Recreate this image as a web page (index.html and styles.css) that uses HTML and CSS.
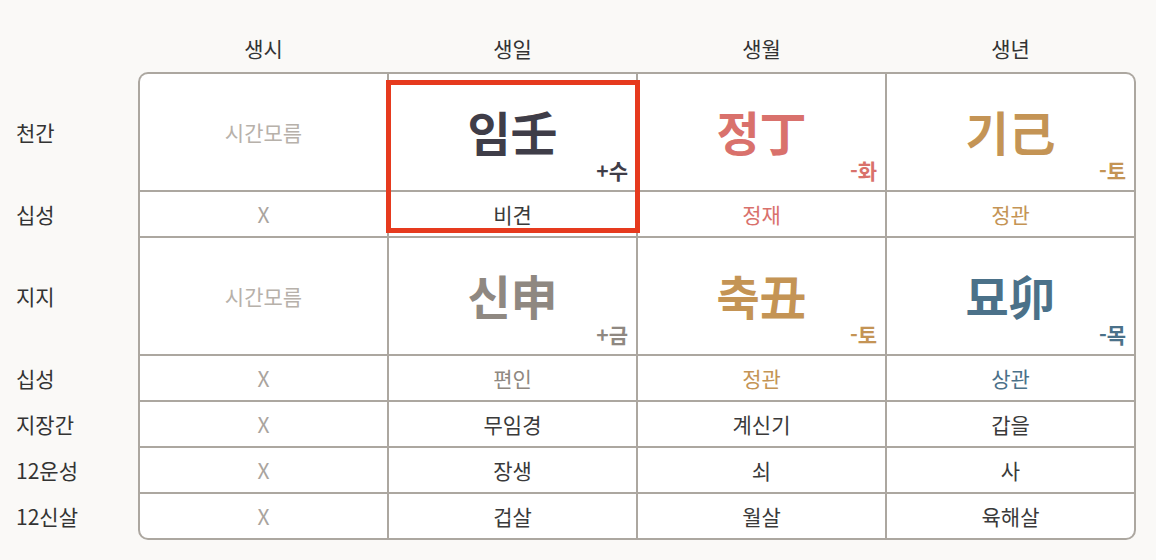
FILE: index.html
```html
<!DOCTYPE html>
<html lang="ko">
<head>
<meta charset="utf-8">
<title>사주</title>
<link rel="stylesheet" href="styles.css">
</head>
<body>
<div class="page">
  <div class="head">
    <div class="hcell">생시</div>
    <div class="hcell">생일</div>
    <div class="hcell">생월</div>
    <div class="hcell">생년</div>
  </div>
  <div class="body">
    <div class="labels">
      <div class="lab">천간</div>
      <div class="lab">십성</div>
      <div class="lab">지지</div>
      <div class="lab">십성</div>
      <div class="lab">지장간</div>
      <div class="lab">12운성</div>
      <div class="lab">12신살</div>
    </div>
    <div class="tablewrap">
      <div class="table">
        <div class="cell unknown">시간모름</div>
        <div class="cell big c-dark">임壬<span class="sub">+수</span></div>
        <div class="cell big c-red">정丁<span class="sub">-화</span></div>
        <div class="cell big c-gold">기己<span class="sub">-토</span></div>

        <div class="cell x">X</div>
        <div class="cell c-text">비견</div>
        <div class="cell c-red">정재</div>
        <div class="cell c-gold">정관</div>

        <div class="cell unknown">시간모름</div>
        <div class="cell big c-gray">신申<span class="sub">+금</span></div>
        <div class="cell big c-gold">축丑<span class="sub">-토</span></div>
        <div class="cell big c-blue">묘卯<span class="sub">-목</span></div>

        <div class="cell x">X</div>
        <div class="cell c-gray">편인</div>
        <div class="cell c-gold">정관</div>
        <div class="cell c-blue">상관</div>

        <div class="cell x">X</div>
        <div class="cell c-text">무임경</div>
        <div class="cell c-text">계신기</div>
        <div class="cell c-text">갑을</div>

        <div class="cell x">X</div>
        <div class="cell c-text">장생</div>
        <div class="cell c-text">쇠</div>
        <div class="cell c-text">사</div>

        <div class="cell x">X</div>
        <div class="cell c-text">겁살</div>
        <div class="cell c-text">월살</div>
        <div class="cell c-text">육해살</div>
      </div>
      <div class="highlight"></div>
    </div>
  </div>
</div>
</body>
</html>
```

FILE: styles.css
```css
html, body {
  margin: 0;
  padding: 0;
  background: #faf9f7;
}
body {
  font-family: "Noto Sans CJK KR", "Noto Sans", sans-serif;
  color: #3a3a3a;
}
.page {
  width: 1156px;
  height: 560px;
}
.head {
  display: grid;
  grid-template-columns: repeat(4, 247px);
  column-gap: 2px;
  margin-left: 140px;
  height: 72px;
  box-sizing: border-box;
  padding-bottom: 12px;
  align-items: end;
}
.hcell {
  text-align: center;
  font-size: 21px;
  line-height: 24px;
  font-weight: 400;
  color: #333;
}
.body {
  display: flex;
}
.labels {
  width: 138px;
  box-sizing: border-box;
  padding-left: 16px;
  padding-top: 2px;
  display: grid;
  grid-template-rows: 116px 44px 116px 44px 44px 44px 44px;
  row-gap: 2px;
}
.lab {
  display: flex;
  align-items: center;
  font-size: 21px;
  font-weight: 400;
  color: #333;
}
.tablewrap {
  position: relative;
}
.table {
  display: grid;
  grid-template-columns: repeat(4, 247px);
  grid-template-rows: 116px 44px 116px 44px 44px 44px 44px;
  gap: 2px;
  border: 2px solid #aca7a0;
  background: #aca7a0;
  border-radius: 10px;
  overflow: hidden;
}
.cell {
  position: relative;
  background: #fff;
  display: flex;
  align-items: center;
  justify-content: center;
  font-size: 21px;
  line-height: 24px;
}
.cell.big {
  font-size: 47px;
  font-weight: 700;
  line-height: 54px;
  padding-bottom: 2px;
  box-sizing: border-box;
}
.sub {
  position: absolute;
  right: 8px;
  bottom: 8px;
  font-size: 21px;
  line-height: 24px;
  font-weight: 700;
}
.unknown { color: #b7b1aa; }
.x { color: #aaa49e; }
.c-text { color: #3a3a3a; }
.c-dark { color: #3f3d48; }
.c-red { color: #d9716c; }
.c-gold { color: #c49455; }
.c-gray { color: #8f8881; }
.c-blue { color: #4b7189; }
.highlight {
  position: absolute;
  left: 248px;
  top: 8px;
  width: 254px;
  height: 153px;
  box-sizing: border-box;
  border: 5px solid #e63a1e;
}
```
